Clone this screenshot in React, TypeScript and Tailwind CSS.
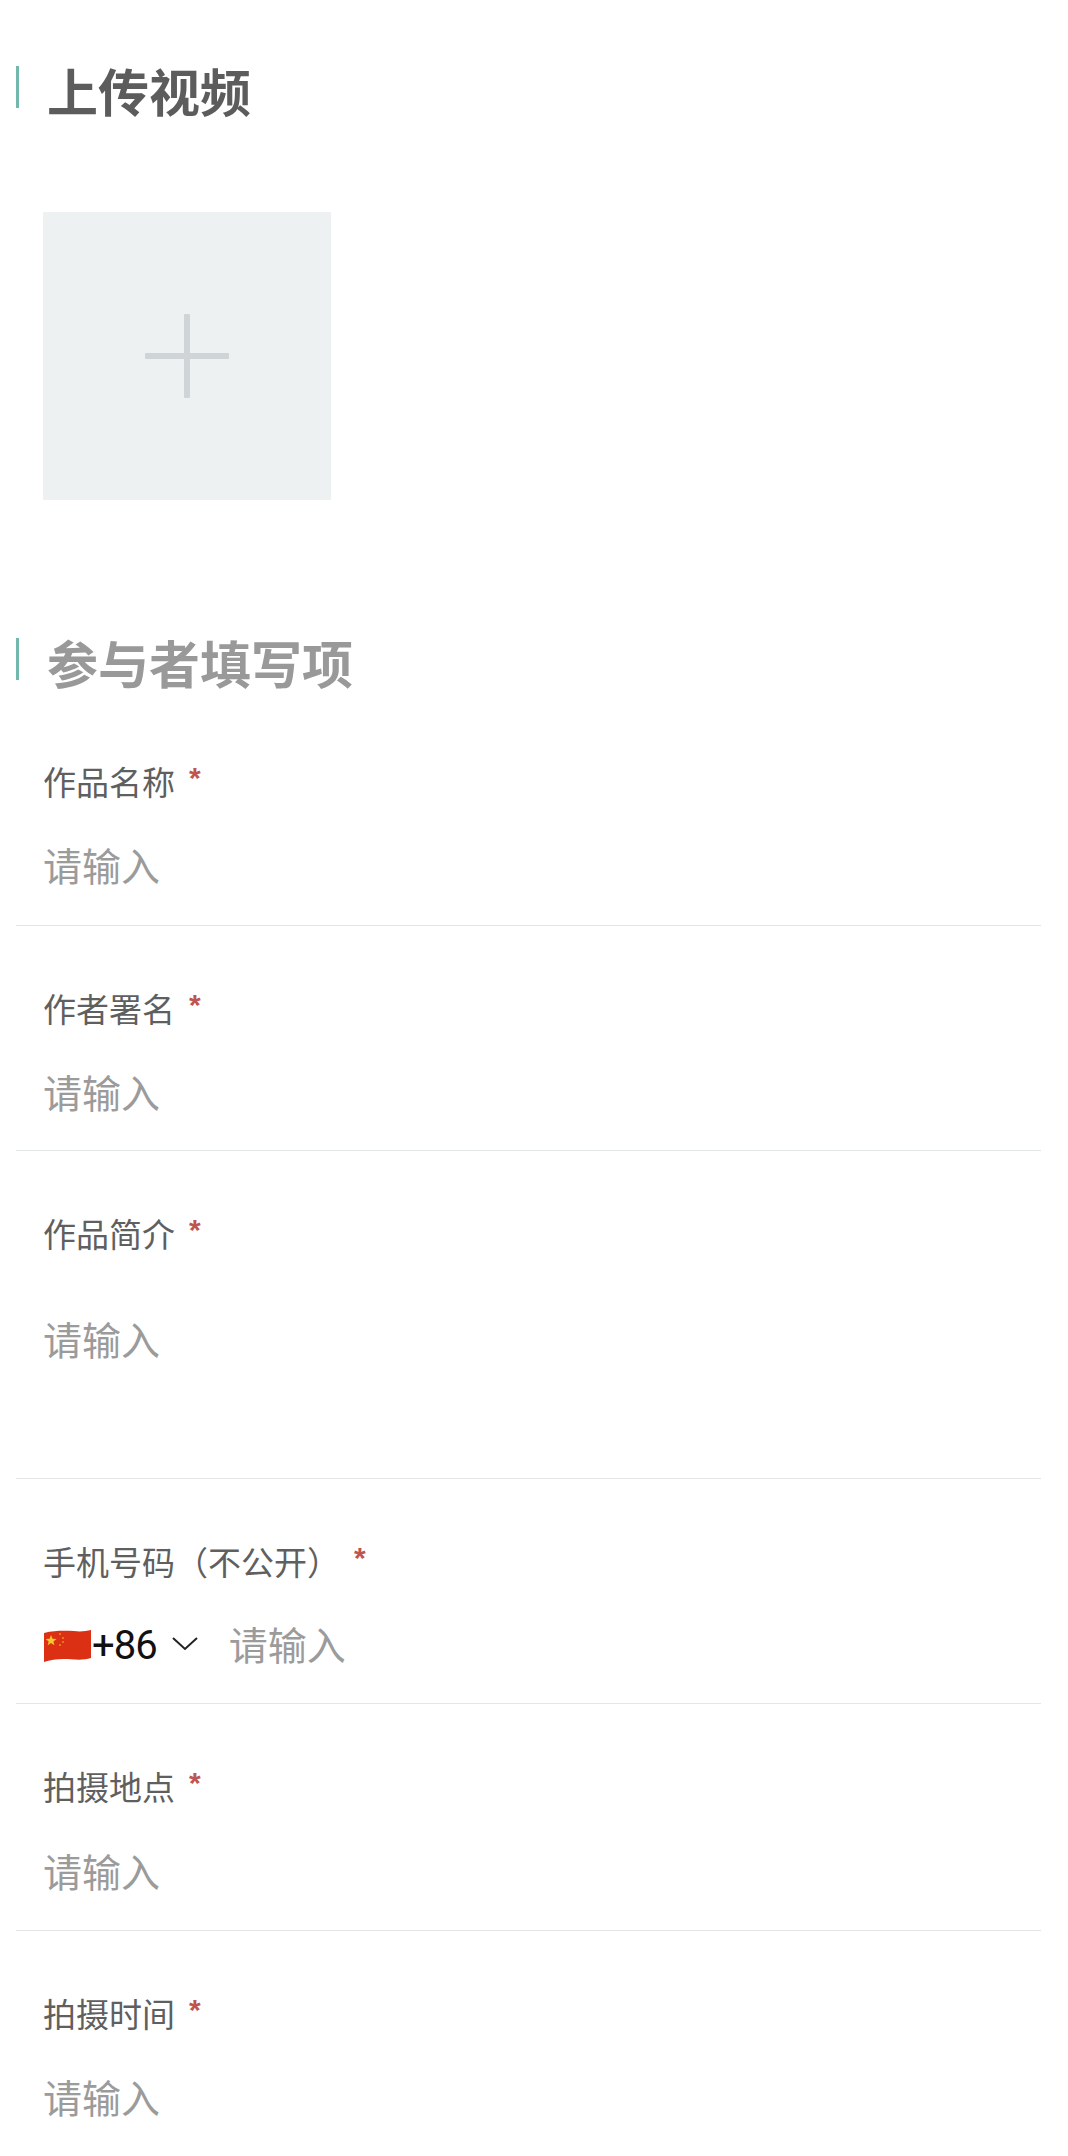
import React from "react";

const cjk = "font-['Noto_Sans_CJK_SC','Noto_Sans',sans-serif]";

function Heading({ text, muted }: { text: string; muted?: boolean }) {
  return (
    <div className="flex items-center h-[42px]">
      <div className="w-[3px] h-[42px] bg-[#72b8ac]" />
      <h2 className={`ml-[28px] pt-[5px] text-[51px] leading-[42px] font-bold ${muted ? "text-[#999999]" : "text-[#5c5c5c]"}`}>{text}</h2>
    </div>
  );
}

function Star() {
  return (
    <span className="ml-[14px] -mt-[6px] font-['Liberation_Sans',sans-serif] text-[30px] font-bold leading-[40px] text-[#c0554f]">*</span>
  );
}

function Field({ label, h, mt, last }: { label: string; h: string; mt: string; last?: boolean }) {
  return (
    <div className={`${h} ${last ? "" : "border-b border-[#e3e6e6]"} pt-[62px]`}>
      <div className="flex h-[40px] items-center pl-[27px] text-[33px] leading-[40px] text-[#5f5f5f]">
        <span>{label}</span>
        <Star />
      </div>
      <div className={`${mt} pl-[27px] text-[39px] leading-[46px] text-[#9b9b9b]`}>请输入</div>
    </div>
  );
}

function Flag() {
  return (
    <svg width="47" height="34" viewBox="0 0 47 34" className="mt-[5px] shrink-0">
      <path d="M0 4 C12 1 22 2 30 2 C37 3 42 2 47 1 V29 C38 32 28 30 20 30 C12 30 6 31 0 33 Z" fill="#dc3015" />
      <path d="M7 6 l1.500 3.700 4 .2-3.100 2.500 1 3.900-3.400-2.200-3.300 2.200 1-3.900-3.100-2.500 4-.2z" fill="#f7c62f" />
      <circle cx="16" cy="5" r="0.8" fill="#f7c62f" />
      <circle cx="19" cy="9" r="0.8" fill="#f7c62f" />
      <circle cx="19" cy="13" r="0.8" fill="#f7c62f" />
      <circle cx="16" cy="16" r="0.8" fill="#f7c62f" />
    </svg>
  );
}

export default function App() {
  return (
    <div className={`h-[2156px] w-[1068px] overflow-hidden bg-white ${cjk}`}>
      <div className="ml-[16px] w-[1025px]">
        <div className="pt-[66px]">
          <Heading text="上传视频" />
        </div>
        <div className="ml-[27px] mt-[104px] flex h-[288px] w-[288px] items-center justify-center bg-[#edf1f2]">
          <svg width="84" height="84" viewBox="0 0 84 84">
            <rect x="0" y="39" width="84" height="6" rx="1" fill="#cfd5d6" />
            <rect x="39" y="0" width="6" height="84" rx="1" fill="#cfd5d6" />
          </svg>
        </div>
        <div className="mt-[138px]">
          <Heading text="参与者填写项" muted />
        </div>
        <div className="mt-[19px]">
          <Field label="作品名称" h="h-[227px]" mt="mt-[40px]" />
          <Field label="作者署名" h="h-[225px]" mt="mt-[40px]" />
          <Field label="作品简介" h="h-[328px]" mt="mt-[62px]" />
          <div className="h-[225px] border-b border-[#e3e6e6] pt-[62px]">
            <div className="flex h-[40px] items-center pl-[27px] text-[33px] leading-[40px] text-[#5f5f5f]">
              <span>手机号码（不公开）</span>
              <Star />
            </div>
            <div className="mt-[39px] flex h-[46px] items-center pl-[28px]">
              <Flag />
              <span className="ml-[1px] mt-[6px] font-['Roboto',sans-serif] text-[40px] leading-[46px] tracking-[-1px] text-[#111111]">+86</span>
              <svg width="26" height="14" viewBox="0 0 26 14" className="ml-[15px] mt-[1px]">
                <path d="M1 1 L13 12 L25 1" fill="none" stroke="#222222" strokeWidth="2" />
              </svg>
              <span className="ml-[31px] text-[39px] leading-[46px] text-[#9b9b9b]">请输入</span>
            </div>
          </div>
          <Field label="拍摄地点" h="h-[227px]" mt="mt-[41px]" />
          <Field label="拍摄时间" h="h-[226px]" mt="mt-[40px]" last />
        </div>
      </div>
    </div>
  );
}
